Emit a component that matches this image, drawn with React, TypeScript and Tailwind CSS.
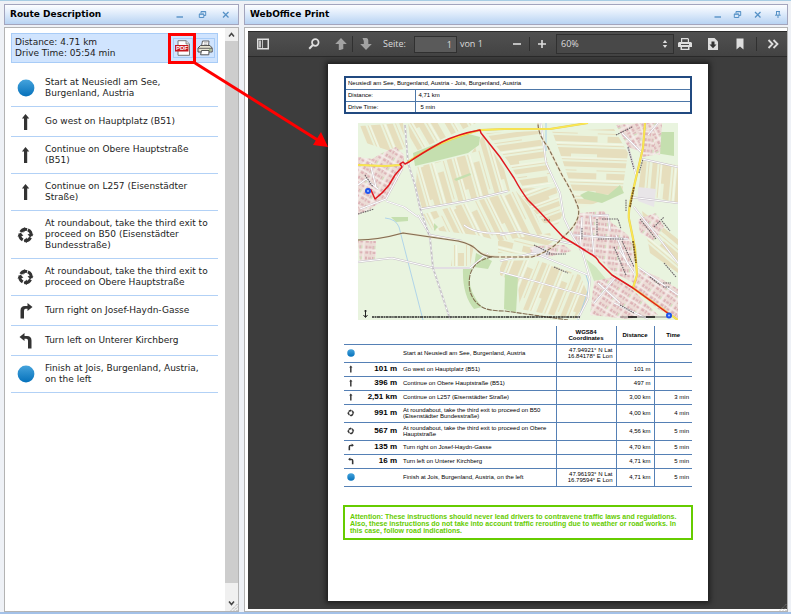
import { useState } from 'react';
import type { ReactNode } from 'react';

type StepKind = 'point' | 'straight' | 'roundabout' | 'right' | 'left';

interface Step {
    kind: StepKind;
    text: string;
    leg: string;
    coords: string[];
    distance: string;
    time: string;
}

const steps: Step[] = [
    { kind: 'point', text: 'Start at Neusiedl am See, Burgenland, Austria', leg: '', coords: ['47.94921° N Lat', '16.84178° E Lon'], distance: '', time: '' },
    { kind: 'straight', text: 'Go west on Hauptplatz (B51)', leg: '101 m', coords: [], distance: '101 m', time: '' },
    { kind: 'straight', text: 'Continue on Obere Hauptstraße (B51)', leg: '396 m', coords: [], distance: '497 m', time: '' },
    { kind: 'straight', text: 'Continue on L257 (Eisenstädter Straße)', leg: '2,51 km', coords: [], distance: '3,00 km', time: '3 min' },
    { kind: 'roundabout', text: 'At roundabout, take the third exit to proceed on B50 (Eisenstädter Bundesstraße)', leg: '991 m', coords: [], distance: '4,00 km', time: '4 min' },
    { kind: 'roundabout', text: 'At roundabout, take the third exit to proceed on Obere Hauptstraße', leg: '567 m', coords: [], distance: '4,56 km', time: '5 min' },
    { kind: 'right', text: 'Turn right on Josef-Haydn-Gasse', leg: '135 m', coords: [], distance: '4,70 km', time: '5 min' },
    { kind: 'left', text: 'Turn left on Unterer Kirchberg', leg: '16 m', coords: [], distance: '4,71 km', time: '5 min' },
    { kind: 'point', text: 'Finish at Jois, Burgenland, Austria, on the left', leg: '', coords: ['47.96193° N Lat', '16.79594° E Lon'], distance: '4,71 km', time: '5 min' }
];

function StepIcon({ kind, className }: { kind: StepKind; className: string }) {
    if (kind === 'point') {
        return (
            <svg viewBox="0 0 18 18" className={className} aria-hidden="true">
                <defs>
                    <linearGradient id="point" x1="0" y1="0" x2="0" y2="1">
                        <stop offset="0" stopColor="#45a3dc" />
                        <stop offset="1" stopColor="#0571bb" />
                    </linearGradient>
                </defs>
                <circle cx="9" cy="9" r="8.4" fill="url(#point)" />
            </svg>
        );
    }
    return (
        <svg viewBox="0 0 18 18" className={className} aria-hidden="true">
            {kind === 'straight' && <path d="M8.5 1 L12.3 5.5 H10.2 V17 H7 V5.5 H4.9 Z" fill="#333" />}
            {kind === 'right' && <path d="M3.5 16.5 V8.5 Q3.5 4 8 4 H10.5 V1 L15.5 5 L10.5 9 V6.8 H8.7 Q7 6.8 7 8.8 V16.5 Z" fill="#333" />}
            {kind === 'left' && <path d="M14.5 16.5 V8.5 Q14.5 4 10 4 H7.5 V1 L2.5 5 L7.5 9 V6.8 H9.3 Q11 6.8 11 8.8 V16.5 Z" fill="#333" />}
            {kind === 'roundabout' && (
                <>
                    <circle cx="8.5" cy="9" r="5.6" fill="none" stroke="#333" strokeWidth="3" strokeDasharray="7 1.8" transform="rotate(-65 8.5 9)" />
                    <path d="M7 1 L9.6 3.6 L6.2 6.8 Z M16.6 8.5 L13 11.5 L10.6 8 Z M10 17 L6.6 14.6 L9.8 11.6 Z M.4 10.4 L3.6 6.6 L6.4 9.8 Z" fill="#333" />
                </>
            )}
        </svg>
    );
}

function WindowIcon({ name }: { name: string }) {
    return (
        <svg viewBox="0 0 9 9" className="h-[9px] w-[9px]" fill="none" stroke="#5691c6" aria-hidden="true">
            {name === 'Minimize' && <path d="M1.5 7 H8" strokeWidth="1.4" />}
            {name === 'Restore' && <path d="M3 3 V1.5 H7.7 V5.5 H6 M1.3 4 H5.8 V7.5 H1.3 Z M3 1.8 H7.7 M1.3 4.2 H5.8" />}
            {name === 'Close' && <path d="M2 2 L7.5 7.5 M7.5 2 L2 7.5" strokeWidth="1.3" />}
            {name === 'Pin' && <path d="M3 1.5 H7 M3.5 1.5 V5 M6.2 1.5 V5 M2 5.2 H7.7 M5 5.2 V8" />}
        </svg>
    );
}

interface PanelProps {
    title: string;
    controls: string[];
    controlsClass: string;
    className: string;
    children: ReactNode;
}

function Panel({ title, controls, controlsClass, className, children }: PanelProps) {
    return (
        <section className={`flex flex-col gap-0.5 ${className}`}>
            <header className="flex h-[21px] shrink-0 items-center border border-[#a3a5bd] bg-linear-to-b from-[#fdfeff] via-[#dbe9fa] to-[#b8d3f2] pl-[5px]">
                <h1 className="flex-1 font-['DejaVu_Sans',sans-serif] text-[9px] font-bold text-black">{title}</h1>
                <div className={`flex ${controlsClass}`}>
                    {controls.map((name) => (
                        <button key={name} type="button" aria-label={name} className="flex w-[18px] items-center justify-center">
                            <WindowIcon name={name} />
                        </button>
                    ))}
                </div>
            </header>
            {children}
        </section>
    );
}

function Grip() {
    return (
        <svg viewBox="0 0 8 8" className="absolute right-0 bottom-0 h-2 w-2" aria-hidden="true">
            <path d="M1 7.5 L7.5 1 M4 7.5 L7.5 4 M6.5 8 L8 6.5" stroke="#8a8a8a" strokeDasharray="1 1" />
        </svg>
    );
}

function PdfIcon() {
    return (
        <svg viewBox="0 0 16 16" className="h-4 w-4" aria-hidden="true">
            <path d="M3 .7 H11 L14.5 4 V15.3 H3 Z" fill="#fff" stroke="#777" />
            <path d="M11 .7 V4 H14.5" fill="#ddd" stroke="#777" strokeWidth=".8" />
            <rect x="0" y="5" width="13.5" height="6.5" fill="#c5161d" />
            <text x="1" y="10.4" fontFamily="Liberation Sans, sans-serif" fontWeight="bold" fontSize="6" fill="#fff">PDF</text>
        </svg>
    );
}

function PrintIcon() {
    return (
        <svg viewBox="0 0 16 16" className="h-4 w-4" aria-hidden="true">
            <path d="M4.5 6 L5.5 1 H12 L11.5 6" fill="#fff" stroke="#555" strokeWidth=".9" />
            <path d="M7 2.8 H10.5 M6.8 4.4 H10.3" stroke="#999" strokeWidth=".7" />
            <path d="M1 8 L3.5 5.5 H13 L15.2 8 V12 H1 Z" fill="#e5e2d0" stroke="#444" strokeWidth=".9" />
            <path d="M1.5 8.3 H15" stroke="#555" strokeWidth=".9" />
            <path d="M4.5 10.5 L3.6 14.8 H11.8 L12 10.5 Z" fill="#fff" stroke="#444" strokeWidth=".9" />
            <rect x="12.2" y="9.4" width="1.5" height="1.2" fill="#56a33e" />
        </svg>
    );
}

function RoutePanel() {
    return (
        <Panel title="Route Description" controls={['Minimize', 'Restore', 'Close']} controlsClass="gap-[5px] pr-1" className="w-[235px] shrink-0">
            <div className="relative flex flex-1 border border-[#b3b3b3] bg-white font-['DejaVu_Sans',sans-serif] text-[9px] leading-[11px] text-[#1c1c1c]">
                <div className="flex-1 py-[5px] pr-[7px] pl-1.5">
                    <div className="flex h-[30px] items-center gap-0.5 border border-[#a8ccf7] bg-[#d0e4fe] pr-0.5 pl-[3px]">
                        <p className="flex-1">
                            Distance: 4.71 km
                            <br />
                            Drive Time: 05:54 min
                        </p>
                        <button type="button" aria-label="Create PDF" className="flex h-5 w-5 items-center justify-center border border-[#a8ccf7]">
                            <PdfIcon />
                        </button>
                        <button type="button" aria-label="Print" className="flex h-5 w-5 items-center justify-center border border-[#a8ccf7]">
                            <PrintIcon />
                        </button>
                    </div>
                    <ol className="pt-[7px]">
                        {steps.map((step) => (
                            <li key={step.text} className="flex min-h-[30px] items-center gap-2.5 border-b border-[#b2d1f6] py-[7px] pr-2 pl-1.5">
                                <StepIcon kind={step.kind} className="-my-1 h-[18px] w-[18px] shrink-0" />
                                <span className="flex-1">{step.text}</span>
                            </li>
                        ))}
                    </ol>
                </div>
                <div className="flex w-[13px] flex-col bg-[#f0f0f0]" aria-hidden="true">
                    <svg viewBox="0 0 13 13" className="h-[13px] w-[13px]">
                        <path d="M4 8.5 L6.5 5.5 L9 8.5" fill="none" stroke="#444" strokeWidth="1.5" />
                    </svg>
                    <div className="flex-1 bg-[#cdcdcd]" />
                    <svg viewBox="0 0 13 28" className="h-7 w-[13px]">
                        <path d="M4 18.5 L6.5 21.5 L9 18.5" fill="none" stroke="#444" strokeWidth="1.5" />
                    </svg>
                </div>
                <Grip />
            </div>
        </Panel>
    );
}

const iconButton = 'flex h-5 items-center justify-center text-[#dedede]';

function Toolbar() {
    const [page, setPage] = useState('1');
    const [scale, setScale] = useState('60%');

    return (
        <div className="flex h-[26px] items-center border-t border-b border-[#2a2a2a] bg-linear-to-b from-[#505050] to-[#434343] pr-1.5 pl-[7px] font-['Open_Sans',sans-serif] text-[9px] text-[#dcdcdc]">
            <button type="button" aria-label="Toggle sidebar" className={`${iconButton} mr-[33px] w-4`}>
                <svg viewBox="0 0 12 12" className="h-3 w-3" fill="currentColor">
                    <path fillRule="evenodd" d="M0 .5 H12 V11.5 H0 Z M1.5 2 V10 H10.5 V2 Z" />
                    <path d="M2 2.5 H4 V9.5 H2 Z M5 2 H6 V10 H5 Z" opacity=".8" />
                </svg>
            </button>
            <button type="button" aria-label="Find" className={`${iconButton} mr-2 w-5`}>
                <svg viewBox="0 0 12 12" className="h-3 w-3" fill="none" stroke="currentColor">
                    <circle cx="7.3" cy="4.5" r="3.3" strokeWidth="1.7" />
                    <path d="M4.8 7 L1.2 10.7" strokeWidth="2" />
                </svg>
            </button>
            <button type="button" aria-label="Previous page" className={`${iconButton} mr-0.5 w-[18px] opacity-60`}>
                <svg viewBox="0 0 12 12" className="h-3 w-3" fill="currentColor">
                    <path d="M6 0 L11.8 6 H8.3 V11 L5 12 H3.8 V6 H.2 Z" />
                </svg>
            </button>
            <span className="h-4 w-px bg-[#303030]" />
            <button type="button" aria-label="Next page" className={`${iconButton} mr-2 ml-1 w-[18px] opacity-60`}>
                <svg viewBox="0 0 12 12" className="h-3 w-3" fill="currentColor">
                    <path d="M6 12 L.2 6 H3.8 V3 L2.5 0 H6.5 Q8.3 .3 8.3 2.5 V6 H11.8 Z" />
                </svg>
            </button>
            <label htmlFor="page" className="mr-2">Seite:</label>
            <input
                id="page"
                type="text"
                value={page}
                onChange={(e) => setPage(e.target.value)}
                className="mr-[3px] h-[17px] w-[43px] border border-[#303030] bg-[#5a5a5a] pr-1 text-right"
            />
            <span>von 1</span>
            <button type="button" aria-label="Zoom out" className={`${iconButton} mr-1.5 ml-auto w-3`}>
                <svg viewBox="0 0 10 10" className="h-2.5 w-2.5" fill="none" stroke="currentColor" strokeWidth="1.6">
                    <path d="M1 5 H9" />
                </svg>
            </button>
            <span className="h-3.5 w-px bg-[#303030]" />
            <button type="button" aria-label="Zoom in" className={`${iconButton} mr-2 ml-1.5 w-3`}>
                <svg viewBox="0 0 10 10" className="h-2.5 w-2.5" fill="none" stroke="currentColor" strokeWidth="1.6">
                    <path d="M1 5 H9 M5 1 V9" />
                </svg>
            </button>
            <div className="relative mr-[3px]">
                <select
                    aria-label="Zoom"
                    value={scale}
                    onChange={(e) => setScale(e.target.value)}
                    className="block h-5 w-[118px] appearance-none border border-[#303030] bg-[#484848] pl-1"
                >
                    <option>60%</option>
                    <option>100%</option>
                </select>
                <svg viewBox="0 0 6 8" className="pointer-events-none absolute top-1.5 right-1.5 h-2 w-1.5" fill="#dedede">
                    <path d="M3 0 L5.2 3 H.8 Z M3 8 L.8 5 H5.2 Z" />
                </svg>
            </div>
            <button type="button" aria-label="Print document" className={`${iconButton} mr-3 w-4`}>
                <svg viewBox="0 0 14 12" className="h-3 w-3.5" fill="currentColor">
                    <path fillRule="evenodd" d="M3 0 H10 L11 1 V4 H13 L14 5 V9 H11.5 V12 H2.5 V9 H0 V5 L1 4 H3 Z M4.2 1.2 V4 H9.8 V1.2 Z M3 6 V7 H11 V6 Z M4 9 V10.7 H10 V9 Z" />
                </svg>
            </button>
            <button type="button" aria-label="Download" className={`${iconButton} mr-[13px] w-4`}>
                <svg viewBox="0 0 12 12" className="h-3 w-3" fill="currentColor">
                    <path d="M1 0 H7.5 L11 3.5 V12 H1 Z" />
                    <path d="M4.5 3.5 H7.5 V6.5 H9.5 L6 10.3 L2.5 6.5 H4.5 Z" fill="#333" />
                </svg>
            </button>
            <button type="button" aria-label="Bookmark" className={`${iconButton} mr-2.5 w-3`}>
                <svg viewBox="0 0 12 12" className="h-3 w-3" fill="currentColor">
                    <path d="M2.5 .5 H9.5 V11.5 L6 8.5 L2.5 11.5 Z" />
                </svg>
            </button>
            <span className="h-3.5 w-px bg-[#303030]" />
            <button type="button" aria-label="Tools" className={`${iconButton} ml-2 w-4`}>
                <svg viewBox="0 0 12 10" className="h-2.5 w-3" fill="none" stroke="currentColor" strokeWidth="1.8">
                    <path d="M1.5 1 L5.5 5 L1.5 9 M6.5 1 L10.5 5 L6.5 9" />
                </svg>
            </button>
        </div>
    );
}

// farmland blocks: outline and direction of the strips
const fields = [
    { points: '2,3 45,0 47,26 32,28 8,20', angle: 68 },
    { points: '50,0 118,0 84,16 54,30', angle: 60 },
    { points: '59,44 113,31 125,12 146,46 152,68 64,86 58,62', angle: 74 },
    { points: '65,91 158,68 178,92 186,112 150,120 118,112 74,107', angle: 64 },
    { points: '96,122 116,122 112,143 93,143', angle: 90 },
    { points: '128,10 180,8 190,40 196,60 166,66 150,38', angle: -8 },
    { points: '158,66 198,64 204,92 200,102 186,100', angle: -20 },
    { points: '194,8 256,6 270,30 264,70 222,86 212,60 202,30', angle: 2 },
    { points: '284,38 320,42 320,80 280,70', angle: 95 },
    { points: '140,118 192,110 196,118 176,131 140,130', angle: 14 },
    { points: '142,138 178,137 222,152 232,176 216,196 162,186 160,162 142,152', angle: 112 },
    { points: '284,88 320,116 320,150 292,130', angle: 40 },
    { points: '252,160 268,166 262,180 250,176', angle: 60 }
];

const towns = [
    { points: '0,34 14,36 24,30 38,24 46,32 46,44 38,60 28,76 12,86 0,92', angle: 30 },
    { points: '0,118 18,118 18,136 2,138', angle: 3 },
    { points: '222,90 246,88 254,100 270,112 276,126 276,160 256,150 240,134 222,128 214,112', angle: 5 },
    { points: '258,2 284,0 304,0 302,32 286,30 270,24', angle: 62 },
    { points: '280,8 296,6 296,32 284,34', angle: 5 },
    { points: '280,96 298,90 306,104 296,118 282,110', angle: 35 },
    { points: '282,146 300,154 320,166 320,196 300,186 274,164', angle: 35 },
    { points: '236,158 256,154 276,168 300,192 270,196 232,192', angle: 32 },
    { points: '172,124 188,122 206,122 214,128 190,134 174,134', angle: 10 }
];

const streets = [
    'M0 62 L8 56 L20 66 M2 86 L28 76 L44 46 M12 40 L18 64 M28 78 L46 84 L60 94',
    'M47 2 L50 40 L57 62 L62 85 L72 115 L75 145 L92 196',
    'M62 86 L108 78 L150 68 M60 92 Q66 102 72 112 L104 118 M106 102 Q118 112 150 110',
    'M0 139 L34 135 L76 145 L112 145 L130 130 M142 149 L176 158 L232 174',
    'M142 112 L160 109 L214 121 M142 138 L176 130 L230 152',
    'M183 0 L188 40 L202 70 L206 95 L214 112 L224 128 L232 156 L230 176 L220 196',
    'M216 112 L270 116 M232 92 L236 132 M234 93 L250 92 L252 108 M224 94 L222 122',
    'M270 24 L278 52 M264 10 L284 30 M272 74 L320 80 M276 84 L300 114 L320 140',
    'M258 112 L270 142 M262 128 L276 150 M280 144 L320 172 M240 160 L262 180 M256 180 L290 196',
    'M236 180 L258 154 M290 12 L300 0 M284 36 L320 44'
];

// street names at this scale
const names = 'M7 52 l8 12 M0 91 l16 -5 M258 12 l16 -8 M270 24 l6 22 M281 50 l4 -14 M239 96 v16 M244 96 h16 l3 10 M240 116 h26 M176 122 l16 8 M188 131 h20 M196 144 l14 6 M256 124 l12 28 M264 118 l12 26 M282 96 l16 20 M296 104 l10 -10 M304 98 l8 10 M306 140 l12 14 M292 154 l10 8 M262 182 l14 8 M224 105 v12 M268 88 v-12 M305 160 h8 M305 164 h7 M186 97 h6';

function RouteMap() {
    return (
        <svg viewBox="0 0 320 197" className="block w-full" role="img" aria-label="Route map">
            <defs>
                {fields.map((field, i) => (
                    <pattern key={i} id={`field${i}`} width="37" height="60" patternUnits="userSpaceOnUse" patternTransform={`rotate(${field.angle - 90})`}>
                        <rect width="37" height="60" fill="#eaf3dc" />
                        <path d="M1 0 H6 V60 H1 Z M8 0 H9 V60 H8 Z M11 0 H20 V34 H11 Z M14 34 H20 V60 H14 Z M22 0 H23 V60 H22 Z M26 10 H32 V60 H26 Z M34 0 H35 V40 H34 Z" fill="#e6debd" />
                        <path d="M10 0 V60 M24.5 0 V60" stroke="#f8f8ea" strokeWidth=".8" />
                    </pattern>
                ))}
                {towns.map((town, i) => (
                    <pattern key={i} id={`town${i}`} width="13" height="11" patternUnits="userSpaceOnUse" patternTransform={`rotate(${town.angle})`}>
                        <rect width="13" height="11" fill="#ecdcd6" />
                        <path d="M1 1 H3 V4 H1 Z M4 1.5 H7 V3.5 H4 Z M8 1 H9.5 V4.5 H8 Z M1 6.5 H4 V9 H1 Z M5.5 6 H7 V9.5 H5.5 Z M8.5 7 H11.5 V9 H8.5 Z" fill="#dcb2b6" />
                        <path d="M0 5.2 H13 M12 0 V11" stroke="#f8f4f4" strokeWidth=".9" />
                        <path d="M9.8 1 H11 V4 H9.8 Z" fill="#cfe3bd" />
                    </pattern>
                ))}
            </defs>
            <rect width="320" height="197" fill="#e9f4df" />
            {fields.map((field, i) => (
                <polygon key={i} points={field.points} fill={`url(#field${i})`} />
            ))}
            <g fill="#c5dfaf">
                <path d="M55 30 L80 20 L107 10 L122 14 L121 22 L110 30 L78 38 L57 43 Z" />
                <path d="M105 145 L114 144 Q106 164 124 184 L116 186 Q104 172 105 145 Z M118 130 L134 138 L130 146 L116 144 Z" />
                <path d="M147 151 L160 154 L158 190 L146 186 Z M297 9 H316 V33 L297 30 Z" />
                <path d="M222 72 L230 68 L250 72 L262 62 L266 70 L244 80 L226 76 Z M96 56 L112 50 L113 52 L98 58 Z M33 94 H50 V98 L38 99 Z M76 100 L80 104 L76 108 Z" />
                <path d="M246 92 L252 96 L256 110 L246 108 Z M228 136 L238 144 L248 156 L236 158 Z" opacity=".7" />
            </g>
            {towns.map((town, i) => (
                <polygon key={i} points={town.points} fill={`url(#town${i})`} />
            ))}
            <path d="M280 64 L298 66 L296 84 L280 78 Z M176 124 L192 126 L190 135 L174 133 Z" fill="#e8e5e8" />
            <g fill="none" strokeLinejoin="round">
                <path d="M27 95 Q38 96 41 104 L50 139 L65 197" stroke="#a9d0ea" strokeWidth=".9" />
                <path d="M228 152 Q232 160 230 168 L220 197 M188 0 V28" stroke="#a9d0ea" strokeWidth="1" />
                {streets.map((d) => (
                    <g key={d}>
                        <path d={d} stroke="#c4bcc6" strokeWidth="1.8" />
                        <path d={d} stroke="#fff" strokeWidth="1.1" />
                    </g>
                ))}
                <path d="M47 2 L50 40 L57 62 L62 85 L72 115 L75 145 L92 196" stroke="#a49da5" strokeWidth=".7" strokeDasharray="3 2" />
                <g stroke="#e7dcc2" strokeWidth="1.8">
                    <path d="M0 117 Q20 117 45 110 L100 118 Q114 121 120 128 Q126 134 147 134 L174 134 Q194 128 205 114 Q224 98 220 84 Q214 68 204 52 L190 24 Q180 12 180 0" />
                </g>
                <g stroke="#806b50" strokeWidth="1.1">
                    <path d="M0 117 Q20 117 45 110 L100 118 Q114 121 120 128 Q126 134 137 134" />
                    <path d="M137 134 L174 134 Q194 128 205 114 Q224 98 220 84 Q214 68 204 52 L190 24 Q180 12 180 0" strokeDasharray="4 2" />
                    <path d="M134 134 Q116 137 112 152 Q108 174 124 184 Q130 188 147 188 L210 197" strokeDasharray="5 1" />
                </g>
                <g stroke="#e2c95a" strokeWidth="2.2">
                    <path d="M0 42 L27 43 L43 42 M50 39 Q80 18 122 7 L147 6 L192 6 L230 0" />
                    <path d="M287 0 L285 25 L274 72 Q270 88 271 96 L277 125 L279 152 L275 165 L320 197" />
                </g>
                <g stroke="#fbe94f" strokeWidth="1.4">
                    <path d="M0 42 L27 43 L43 42 M50 39 Q80 18 122 7 L147 6 L192 6 L230 0" />
                    <path d="M287 0 L285 25 L274 72 Q270 88 271 96 L277 125 L279 152 L275 165 L320 197" />
                </g>
                <path d={names} stroke="#6b6569" strokeWidth="1.1" strokeDasharray="1.6 .8" />
                <path d="M272 84 L276 64 M275 118 L278 140" stroke="#7c5b22" strokeWidth="1.8" strokeDasharray="2 .6" />
                <path d="M10 66 L13 67 L17 76 Q25 70 31 62 L37 52 L44 44 L42 41 L45 39 L47 41 L51 39 Q64 30 84 19 Q100 11 122 7 L123 10 L142 34 L156 55 Q163 68 170 77 L180 87 L205 114 Q222 124 231 130 Q239 134 241 139 L254 152 L275 165 L311 191" stroke="#e0181f" strokeWidth="1.5" />
                <path d="M14 194 H222" stroke="#282828" strokeWidth="1.6" strokeDasharray="2.5 .5 1.5 .5 3 .6" />
                <path d="M262 194 H310" stroke="#777" strokeWidth=".9" />
                <path d="M270 194 H279 M288 194 H297" stroke="#111" strokeWidth="1.4" />
                <path d="M7.5 187 V194 M5.5 192 L7.5 194.5 L9.5 192 M6.3 188 H8.7" stroke="#222" strokeWidth="1" />
            </g>
            <circle cx="10" cy="68" r="3" fill="#1f55ee" />
            <circle cx="10" cy="68" r="1.1" fill="#9dbdff" />
            <circle cx="311" cy="192.500" r="3" fill="#1f55ee" />
            <circle cx="311" cy="192.500" r="1.1" fill="#9dbdff" />
        </svg>
    );
}

function RouteSheet() {
    return (
        <article className="mx-auto aspect-[210/297] w-[380px] bg-white px-4 pt-3 font-['Liberation_Sans',sans-serif] text-[6px] leading-[6px] text-black shadow-[0_0_5px_2px_#1c1c1c]">
            <table className="w-full border-collapse border-2 border-[#214a80] text-left">
                <tbody>
                    <tr className="h-3 border-b border-[#4d77a8]">
                        <td colSpan={2} className="px-0.5">Neusiedl am See, Burgenland, Austria - Jois, Burgenland, Austria</td>
                    </tr>
                    <tr className="h-3 border-b border-[#4d77a8]">
                        <th className="w-[70px] border-r border-[#4d77a8] px-0.5 font-normal">Distance:</th>
                        <td className="px-[3px]">4,71 km</td>
                    </tr>
                    <tr className="h-3">
                        <th className="border-r border-[#4d77a8] px-0.5 font-normal">Drive Time:</th>
                        <td className="px-[5px]">5 min</td>
                    </tr>
                </tbody>
            </table>
            <div className="pt-[9px] pr-3.5 pl-3.5">
                <RouteMap />
            </div>
            <table className="mt-1.5 w-full table-fixed border-collapse text-right">
                <colgroup>
                    <col className="w-4" />
                    <col className="w-[40px]" />
                    <col />
                    <col className="w-[60px]" />
                    <col className="w-[38px]" />
                    <col className="w-[38px]" />
                </colgroup>
                <thead>
                    <tr className="h-[18px] border-b border-[#5580b5] text-center">
                        <td colSpan={3} />
                        <th className="border-l border-[#5580b5]">
                            WGS84
                            <br />
                            Coordinates
                        </th>
                        <th className="border-l border-[#5580b5]">Distance</th>
                        <th className="border-l border-[#5580b5]">Time</th>
                    </tr>
                </thead>
                <tbody>
                    {steps.map((step) => (
                        <tr key={step.text} className={`border-b border-[#5580b5] ${step.text.length > 60 || step.kind === 'point' ? 'h-[18px]' : 'h-[14px]'}`}>
                            <td className="pl-[3px]">
                                <StepIcon kind={step.kind} className="h-2 w-2" />
                            </td>
                            <td className="pr-[3px] text-[8px] leading-[8px] font-bold whitespace-nowrap">{step.leg}</td>
                            <td className="pl-[3px] text-left">{step.text}</td>
                            <td className="border-l border-[#5580b5] pr-[3px] whitespace-nowrap">
                                {step.coords.map((line) => (
                                    <div key={line}>{line}</div>
                                ))}
                            </td>
                            <td className="border-l border-[#5580b5] pr-[3px]">{step.distance}</td>
                            <td className="border-l border-[#5580b5] pr-[3px]">{step.time}</td>
                        </tr>
                    ))}
                </tbody>
            </table>
            <p className="-mx-px mt-[18px] border-2 border-[#66cc00] px-[5px] pt-1.5 pb-1 text-[7px] leading-[7px] font-bold text-[#66cc00]">
                Attention: These instructions should never lead drivers to contravene traffic laws and regulations. Also, these instructions do not take into account traffic rerouting due to weather or road works. In this case, follow road indications.
            </p>
        </article>
    );
}

function PrintPanel() {
    return (
        <Panel title="WebOffice Print" controls={['Minimize', 'Restore', 'Close', 'Pin']} controlsClass="gap-0.5 pr-px" className="min-w-0 flex-1">
            <div className="relative flex-1 border border-[#b3b3b3] bg-white pt-[3px] pb-0.5 pl-[3px]">
                <div className="flex h-full flex-col bg-[#3d3d3d]">
                    <Toolbar />
                    <div className="flex-1 pt-[7px] pb-2 pl-px">
                        <RouteSheet />
                    </div>
                </div>
                <Grip />
            </div>
        </Panel>
    );
}

export default function App() {
    return (
        <main className="relative flex min-h-screen gap-[5px] border-t border-b-2 border-t-[#a8cde3] border-b-[#a3c1e8] bg-[#eef1f6] pt-[3px] pr-[3px] pl-1">
            <RoutePanel />
            <PrintPanel />
            {/* callout from the PDF button to the printed sheet */}
            <svg viewBox="0 0 170 120" className="pointer-events-none absolute top-[30px] left-[166px] h-[120px] w-[170px]" fill="none" stroke="#f00" strokeWidth="3" aria-hidden="true">
                <rect x="3.500" y="3.500" width="25" height="28" />
                <path d="M29 32 L158 113" />
                <path d="M162 116 L147 114 L155 101 Z" fill="#f00" stroke="none" />
            </svg>
        </main>
    );
}
